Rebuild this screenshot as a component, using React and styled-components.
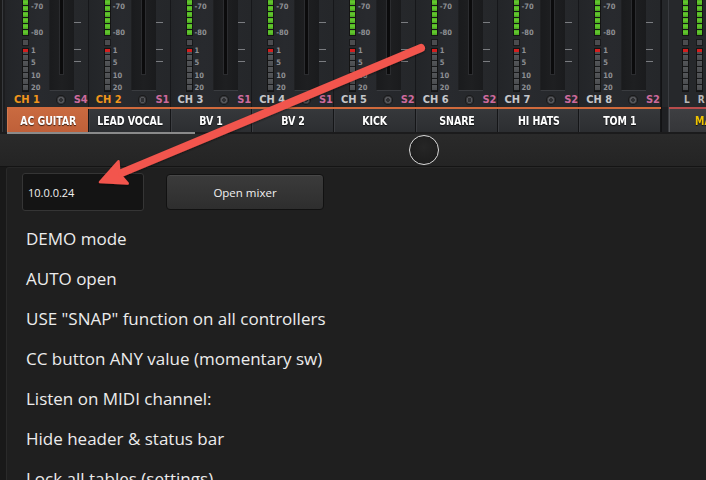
import React from "react";
import styled, { createGlobalStyle } from "styled-components";

const Global = createGlobalStyle`
  html, body { margin: 0; padding: 0; background: #1e1e1e; }
  body { font-family: "Open Sans", "Noto Sans", sans-serif; }
  * { box-sizing: border-box; }
`;

const condensed = `"DejaVu Sans Condensed", "Liberation Sans Narrow", sans-serif`;

const Root = styled.div`
  position: relative;
  width: 706px;
  height: 480px;
  overflow: hidden;
  background: #1e1e1e;
  display: flex;
  flex-direction: column;
`;

const MixerRow = styled.div`
  display: flex;
  height: 132px;
  flex: 0 0 auto;
`;

const Rail = styled.div`
  width: 7px;
  flex: 0 0 7px;
  background: #1c1d1f;
  border-left: 2px solid #1a1a1a;
  border-right: 2px solid #232427;
  box-shadow: inset 1px 0 0 #37393c;
`;

const Channels = styled.div`
  display: flex;
  flex: 0 0 auto;
`;

const Channel = styled.div`
  width: 81.75px;
  display: flex;
  flex-direction: column;
`;

const Strip = styled.div`
  height: 107px;
  background: linear-gradient(to right, #232528, #282a2e 40%, #25272a);
  border-right: 1px solid #16171a;
  display: flex;
  flex-direction: column;
`;

const StripTop = styled.div`
  height: 92px;
  display: flex;
`;

const MeterCol = styled.div`
  margin-left: ${(p) => (p.$flush ? 0 : 15)}px;
  width: 7px;
  display: flex;
  flex-direction: column;
`;

const GreenMeter = styled.div`
  height: 36px;
  border: 1px solid #141414;
  border-top: none;
  background: repeating-linear-gradient(
    to bottom,
    #4fae22 0px,
    #66cc30 2px,
    #49a420 5px,
    #161616 5px,
    #161616 6px
  );
`;

const ClipBox = styled.div`
  margin-top: 3px;
  height: 7px;
  background: #4b4c4f;
  border: 1px solid #18191b;
`;

const GrayMeter = styled.div`
  margin-top: 2px;
  height: 44px;
  border: 1px solid #141414;
  background: linear-gradient(to bottom, #d41e1e 0px, #d41e1e 3px, transparent 3px),
    repeating-linear-gradient(
      to bottom,
      #55575a 0px,
      #4a4c4f 5px,
      #18191b 5px,
      #18191b 6px
    );
`;

const Scale = styled.div`
  position: relative;
  width: 20px;
`;

const ScaleLabel = styled.span`
  position: absolute;
  left: 2px;
  top: ${(p) => p.$y}px;
  font-family: ${condensed};
  font-size: 7.5px;
  font-weight: bold;
  line-height: 8px;
  color: #8e9094;
`;

const Fader = styled.div`
  width: 25px;
  height: 91px;
  background: linear-gradient(to right, #1a1b1d, #1e1f21, #1a1b1d);
  border-bottom: 1px solid #3a3c40;
  border-left: 1px solid #1f2022;
  display: flex;
  justify-content: center;
`;

const Track = styled.div`
  width: 5px;
  height: 75px;
  background: #0b0b0c;
  border: 1px solid #2b2c2f;
  border-top: none;
  margin-left: -1px;
`;

const Ticks = styled.div`
  position: relative;
  width: 8px;
`;

const Tick = styled.div`
  position: absolute;
  left: 0;
  width: 7px;
  height: 1px;
  top: ${(p) => p.$y}px;
  background: #7a7c80;
`;

const LabelRow = styled.div`
  height: 15px;
  display: flex;
  align-items: center;
  padding-left: 7px;
`;

const ChLabel = styled.span`
  font-family: ${condensed};
  font-weight: bold;
  font-size: 11px;
  color: ${(p) => p.$color};
  width: 42px;
`;

const Knob = styled.span`
  width: 10px;
  height: 10px;
  border-radius: 50%;
  background: radial-gradient(circle, #2e2f32 0 2px, #55565a 2px 3px, #3a3b3e 3px);
  border: 1px solid #1a1a1b;
  margin-right: 8px;
`;

const SLabel = styled.span`
  font-family: ${condensed};
  font-weight: bold;
  font-size: 11px;
  color: #cc6a9c;
`;

const TabLine = styled.div`
  height: 2px;
  background: ${(p) => p.$color};
`;

const Tab = styled.div`
  height: 23px;
  display: flex;
  align-items: center;
  justify-content: center;
  background: ${(p) =>
    p.$active
      ? "linear-gradient(to bottom, #c96a40, #bf6039)"
      : "linear-gradient(to bottom, #36383b, #2c2e31)"};
  border-right: 1px solid #141517;
  border-left: 1px solid ${(p) => (p.$active ? "#d27a50" : "#3c3e42")};
  font-family: ${condensed};
  font-weight: bold;
  font-size: 12.5px;
  color: ${(p) => p.$color || "#ffffff"};
  text-shadow: 0 1px 1px rgba(0, 0, 0, 0.7);
  white-space: nowrap;
`;

const TabText = styled.span`
  display: inline-block;
  transform: scaleX(0.84);
  letter-spacing: -0.1px;
`;

const Gap = styled.div`
  width: 8px;
  flex: 0 0 8px;
  display: flex;
  flex-direction: column;
  background: #1f2023;
  border-left: 1px solid #121214;
  border-right: 1px solid #3a3c40;
`;

const GapTop = styled.div`
  height: 107px;
  background: #25272a;
`;

const Master = styled.div`
  flex: 1 1 auto;
  overflow: hidden;
  display: flex;
  flex-direction: column;
`;

const MasterStrip = styled.div`
  height: 107px;
  background: #26282b;
  display: flex;
  flex-direction: column;
`;

const MasterMeters = styled.div`
  height: 92px;
  display: flex;
  padding-left: 13px;
  gap: 7px;
`;

const MasterLabels = styled.div`
  height: 15px;
  display: flex;
  align-items: center;
  padding-left: 15px;
  gap: 8px;
  font-family: ${condensed};
  font-weight: bold;
  font-size: 10px;
  color: #b8b8b8;
`;

const MasterTab = styled(Tab)`
  width: 96px;
  flex: 0 0 auto;
  border-left: 1px solid #55575b;
  background: linear-gradient(to bottom, #3e3f42, #353639);
`;

const ScrollRow = styled.div`
  height: 2px;
  flex: 0 0 2px;
  background: #1b1b1c;
  padding-left: 7px;
`;

const ScrollThumb = styled.div`
  width: 188px;
  height: 2px;
  background: #8a8a8a;
`;

const HandleRow = styled.div`
  height: 32px;
  flex: 0 0 32px;
  background: linear-gradient(to bottom, #2a2a2a, #242424);
  display: flex;
  align-items: center;
  padding-left: 409px;
`;

const HandleCircle = styled.div`
  width: 30px;
  height: 30px;
  border-radius: 50%;
  border: 1.5px solid #d8d8d8;
  background: radial-gradient(circle at 50% 40%, #262626, #1a1a1a);
`;

const PanelWrap = styled.div`
  flex: 1 1 auto;
  display: flex;
  background: #191919;
  border-top: 1px solid #141414;
`;

const Panel = styled.div`
  margin-left: 6px;
  flex: 1 1 auto;
  background: #1f1f1f;
  border-left: 1px solid #2a2a2a;
  border-top: 1px solid #272727;
  border-top-left-radius: 3px;
  padding: 5px 0 0 15px;
  display: flex;
  flex-direction: column;
`;

const TopControls = styled.div`
  display: flex;
  align-items: center;
  gap: 22px;
`;

const AddressBox = styled.div`
  width: 122px;
  height: 38px;
  background: #141414;
  border: 1px solid #353535;
  border-radius: 3px;
  display: flex;
  align-items: center;
  padding-left: 5px;
  font-size: 11px;
  color: #f0f0f0;
`;

const OpenButton = styled.div`
  width: 158px;
  height: 36px;
  border-radius: 4px;
  background: linear-gradient(to bottom, #3b3b3b, #2e2e2e);
  border: 1px solid #111;
  box-shadow: inset 0 1px 0 #474747;
  display: flex;
  align-items: center;
  justify-content: center;
  font-size: 11.5px;
  color: #f0f0f0;
`;

const OptionList = styled.div`
  margin-top: 7px;
  display: flex;
  flex-direction: column;
`;

const Option = styled.div`
  height: 40px;
  display: flex;
  align-items: center;
  padding-left: 4px;
  font-size: 17px;
  color: #ececec;
  white-space: nowrap;
`;

const ArrowSvg = styled.svg`
  position: absolute;
  left: 0;
  top: 0;
  pointer-events: none;
`;

const channels = [
  { name: "AC GUITAR", ch: "CH 1", s: "S4", orange: true, active: true },
  { name: "LEAD VOCAL", ch: "CH 2", s: "S1", orange: true },
  { name: "BV 1", ch: "CH 3", s: "S1" },
  { name: "BV 2", ch: "CH 4", s: "S1" },
  { name: "KICK", ch: "CH 5", s: "S2" },
  { name: "SNARE", ch: "CH 6", s: "S2" },
  { name: "HI HATS", ch: "CH 7", s: "S2" },
  { name: "TOM 1", ch: "CH 8", s: "S2" },
];

const scale = [
  ["-70", 3],
  ["-80", 29],
  ["1", 47],
  ["5", 59],
  ["10", 72],
  ["20", 84],
];

const options = [
  "DEMO mode",
  "AUTO open",
  'USE "SNAP" function on all controllers',
  "CC button ANY value (momentary sw)",
  "Listen on MIDI channel:",
  "Hide header & status bar",
  "Lock all tables (settings)",
];

function Meter({ flush }) {
  return (
    <MeterCol $flush={flush}>
      <GreenMeter />
      <ClipBox />
      <GrayMeter />
    </MeterCol>
  );
}

function ChannelStrip({ c }) {
  return (
    <Channel>
      <Strip>
        <StripTop>
          <Meter />
          <Scale>
            {scale.map(([t, y]) => (
              <ScaleLabel key={t} $y={y}>
                {t}
              </ScaleLabel>
            ))}
          </Scale>
          <Fader>
            <Track />
          </Fader>
          <Ticks>
            <Tick $y={22} />
            <Tick $y={49} />
            <Tick $y={61} />
          </Ticks>
        </StripTop>
        <LabelRow>
          <ChLabel $color={c.orange ? "#f0961c" : "#c4c6ca"}>{c.ch}</ChLabel>
          <Knob />
          <SLabel>{c.s}</SLabel>
        </LabelRow>
      </Strip>
      <TabLine $color="#d06a3c" />
      <Tab $active={c.active}>
        <TabText>{c.name}</TabText>
      </Tab>
    </Channel>
  );
}

export default function App() {
  const tip = [100, 182];
  const start = [421, 48];
  const dx = start[0] - tip[0];
  const dy = start[1] - tip[1];
  const len = Math.hypot(dx, dy);
  const ux = dx / len;
  const uy = dy / len;
  const nx = -uy;
  const ny = ux;
  const hl = 25;
  const hw = 12;
  const bx = tip[0] + ux * hl;
  const by = tip[1] + uy * hl;
  const w1 = [bx + nx * hw, by + ny * hw];
  const w2 = [bx - nx * hw, by - ny * hw];
  const notch = [tip[0] + ux * (hl - 4), tip[1] + uy * (hl - 4)];
  const lineEnd = [tip[0] + ux * (hl - 6), tip[1] + uy * (hl - 6)];

  return (
    <Root>
      <Global />
      <MixerRow>
        <Rail />
        <Channels>
          {channels.map((c) => (
            <ChannelStrip key={c.ch} c={c} />
          ))}
        </Channels>
        <Gap>
          <GapTop />
        </Gap>
        <Master>
          <MasterStrip>
            <MasterMeters>
              <Meter flush />
              <Meter flush />
            </MasterMeters>
            <MasterLabels>
              <span>L</span>
              <span>R</span>
            </MasterLabels>
          </MasterStrip>
          <TabLine $color="#b84c4c" />
          <MasterTab $color="#f0c400">
            <TabText>MASTER</TabText>
          </MasterTab>
        </Master>
      </MixerRow>
      <ScrollRow>
        <ScrollThumb />
      </ScrollRow>
      <HandleRow>
        <HandleCircle />
      </HandleRow>
      <PanelWrap>
        <Panel>
          <TopControls>
            <AddressBox>10.0.0.24</AddressBox>
            <OpenButton>Open mixer</OpenButton>
          </TopControls>
          <OptionList>
            {options.map((o) => (
              <Option key={o}>{o}</Option>
            ))}
          </OptionList>
        </Panel>
      </PanelWrap>
      <ArrowSvg width="706" height="480" viewBox="0 0 706 480">
        <defs>
          <filter id="sh" x="-10%" y="-10%" width="120%" height="120%">
            <feDropShadow dx="0" dy="1" stdDeviation="1.2" floodColor="#000" floodOpacity="0.5" />
          </filter>
        </defs>
        <g filter="url(#sh)" fill="#f2554d" stroke="#f2554d">
          <line
            x1={start[0]}
            y1={start[1]}
            x2={lineEnd[0]}
            y2={lineEnd[1]}
            strokeWidth="8"
            strokeLinecap="round"
          />
          <polygon
            points={`${tip[0]},${tip[1]} ${w1[0]},${w1[1]} ${notch[0]},${notch[1]} ${w2[0]},${w2[1]}`}
            strokeWidth="2.5"
            strokeLinejoin="round"
          />
        </g>
      </ArrowSvg>
    </Root>
  );
}
